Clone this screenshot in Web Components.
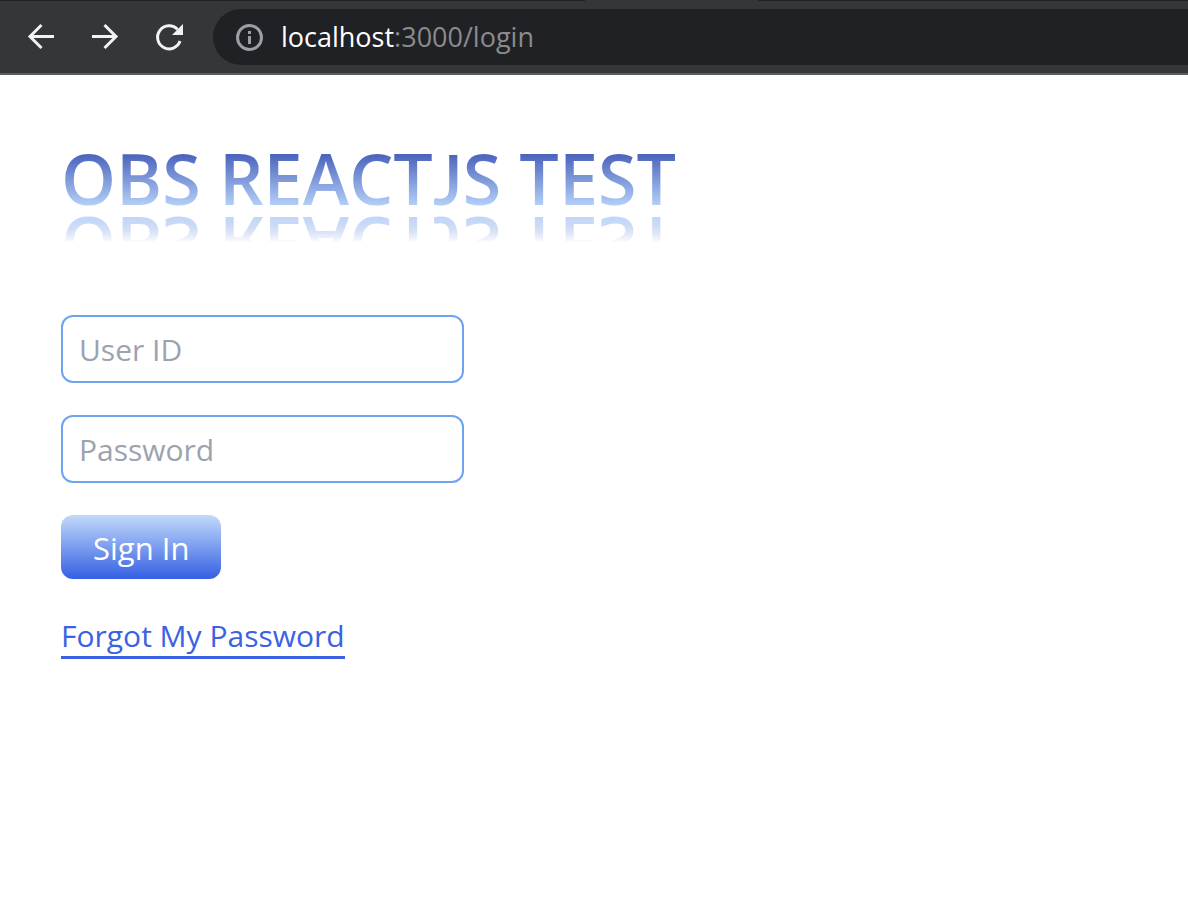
<!DOCTYPE html>
<html lang="en">
<head>
<meta charset="utf-8">
<meta name="viewport" content="width=device-width, initial-scale=1">
<title>OBS ReactJS Test</title>
<style>
body { margin: 0; background: #fff; font-family: "Open Sans", "Noto Sans", sans-serif; }
/* A J that stands on the baseline keeps clear of the reflection. */
.j { font-family: Lato, sans-serif; line-height: 1px; }
</style>
</head>
<body>
<browser-bar><span slot="host">localhost</span><span slot="path">:3000/login</span></browser-bar>
<login-page>
  <reflected-title>OBS REACT<span class="j">J</span>S TEST</reflected-title>
  <login-form></login-form>
</login-page>
<script>
const attach = (el, html) => { el.attachShadow({ mode: "open" }).innerHTML = html; };

customElements.define("browser-bar", class extends HTMLElement {
  constructor() {
    super();
    attach(this, `
      <style>
        :host { display: block; background: #35363a; border-bottom: 2px solid #5b5c60; }
        .tabs { height: 1px; background: linear-gradient(90deg, #202124 585px, #35363a 585px 758px, #202124 758px); }
        .bar { display: flex; align-items: center; padding: 8px 0 8px 25px; }
        nav { display: flex; gap: 32px; margin-right: 28px; }
        button { display: block; padding: 0; border: 0; background: none; color: #f1f3f4; width: 32px; height: 32px; }
        svg { display: block; width: 32px; height: 32px; fill: none; stroke: currentColor; stroke-width: 3; }
        .address { flex: 1; display: flex; align-items: center; gap: 16px; height: 56px; padding-left: 20px;
          border-radius: 28px 0 0 28px; background: #202124; color: #9aa0a6; }
        .url { font-size: 27px; line-height: 36px; color: #8a8b8d; }
        ::slotted([slot=host]) { color: #fff; }
      </style>
      <div class="tabs"></div>
      <div class="bar">
        <nav aria-label="History">
          <button type="button" aria-label="Back"><svg viewBox="0 0 32 32"><path d="M29 15.5H5M16.5 4 5 15.5l11.5 11.5"/></svg></button>
          <button type="button" aria-label="Forward"><svg viewBox="0 0 32 32"><path d="M3 15.5h24M15.5 4l11.5 11.5-11.5 11.5"/></svg></button>
          <button type="button" aria-label="Reload"><svg viewBox="0 0 32 32"><path d="M24.5 8.5A11.5 11.5 0 1 0 27 20"/><path d="M30 3v11H19z" fill="currentColor" stroke="none"/></svg></button>
        </nav>
        <div class="address">
          <svg viewBox="0 0 32 32" aria-hidden="true"><circle cx="16.5" cy="16.5" r="12"/><path d="M16.5 15v8M16.5 10v3"/></svg>
          <div class="url"><slot name="host"></slot><slot name="path"></slot></div>
        </div>
      </div>`);
  }
});

customElements.define("login-page", class extends HTMLElement {
  constructor() {
    super();
    attach(this, `
      <style>:host { display: flex; flex-direction: column; gap: 104px; padding: 64px 61px; }</style>
      <slot></slot>`);
  }
});

customElements.define("reflected-title", class extends HTMLElement {
  constructor() {
    super();
    attach(this, `
      <style>
        :host { display: block; }
        h1 { margin: 0; height: 72px; font-size: 70px; line-height: 78px; font-weight: 600; white-space: nowrap; color: transparent;
          background: linear-gradient(#2b43aa, #bfdbfe); -webkit-background-clip: text; background-clip: text;
          -webkit-box-reflect: below 0 linear-gradient(transparent 56%, #000); }
      </style>
      <h1><slot></slot></h1>`);
  }
});

customElements.define("login-form", class extends HTMLElement {
  constructor() {
    super();
    attach(this, `
      <style>
        :host { display: block; }
        form { display: flex; flex-direction: column; align-items: flex-start; gap: 32px; }
        input, button { font: inherit; line-height: 48px; border-radius: 12px; box-sizing: border-box; }
        input { width: 403px; max-width: 100%; height: 68px; padding: 9px 16px; border: 2px solid #6ea3f2; font-size: 30px; background: #fff; color: #111827; }
        input::placeholder { color: #9ca3af; opacity: 1; }
        button { height: 64px; padding: 9px 32px 7px; border: 0; font-size: 31px; color: #fff; background: linear-gradient(#c3dafb, #345fe2); }
        a { padding-top: 5px; font-size: 30px; line-height: 40px; color: #3b62e3; text-decoration: none; border-bottom: 3px solid; }
      </style>
      <form>
        <input type="text" placeholder="User ID" aria-label="User ID">
        <input type="password" placeholder="Password" aria-label="Password">
        <button type="button">Sign In</button>
        <a href="#">Forgot My Password</a>
      </form>`);
  }
});
</script>
</body>
</html>
